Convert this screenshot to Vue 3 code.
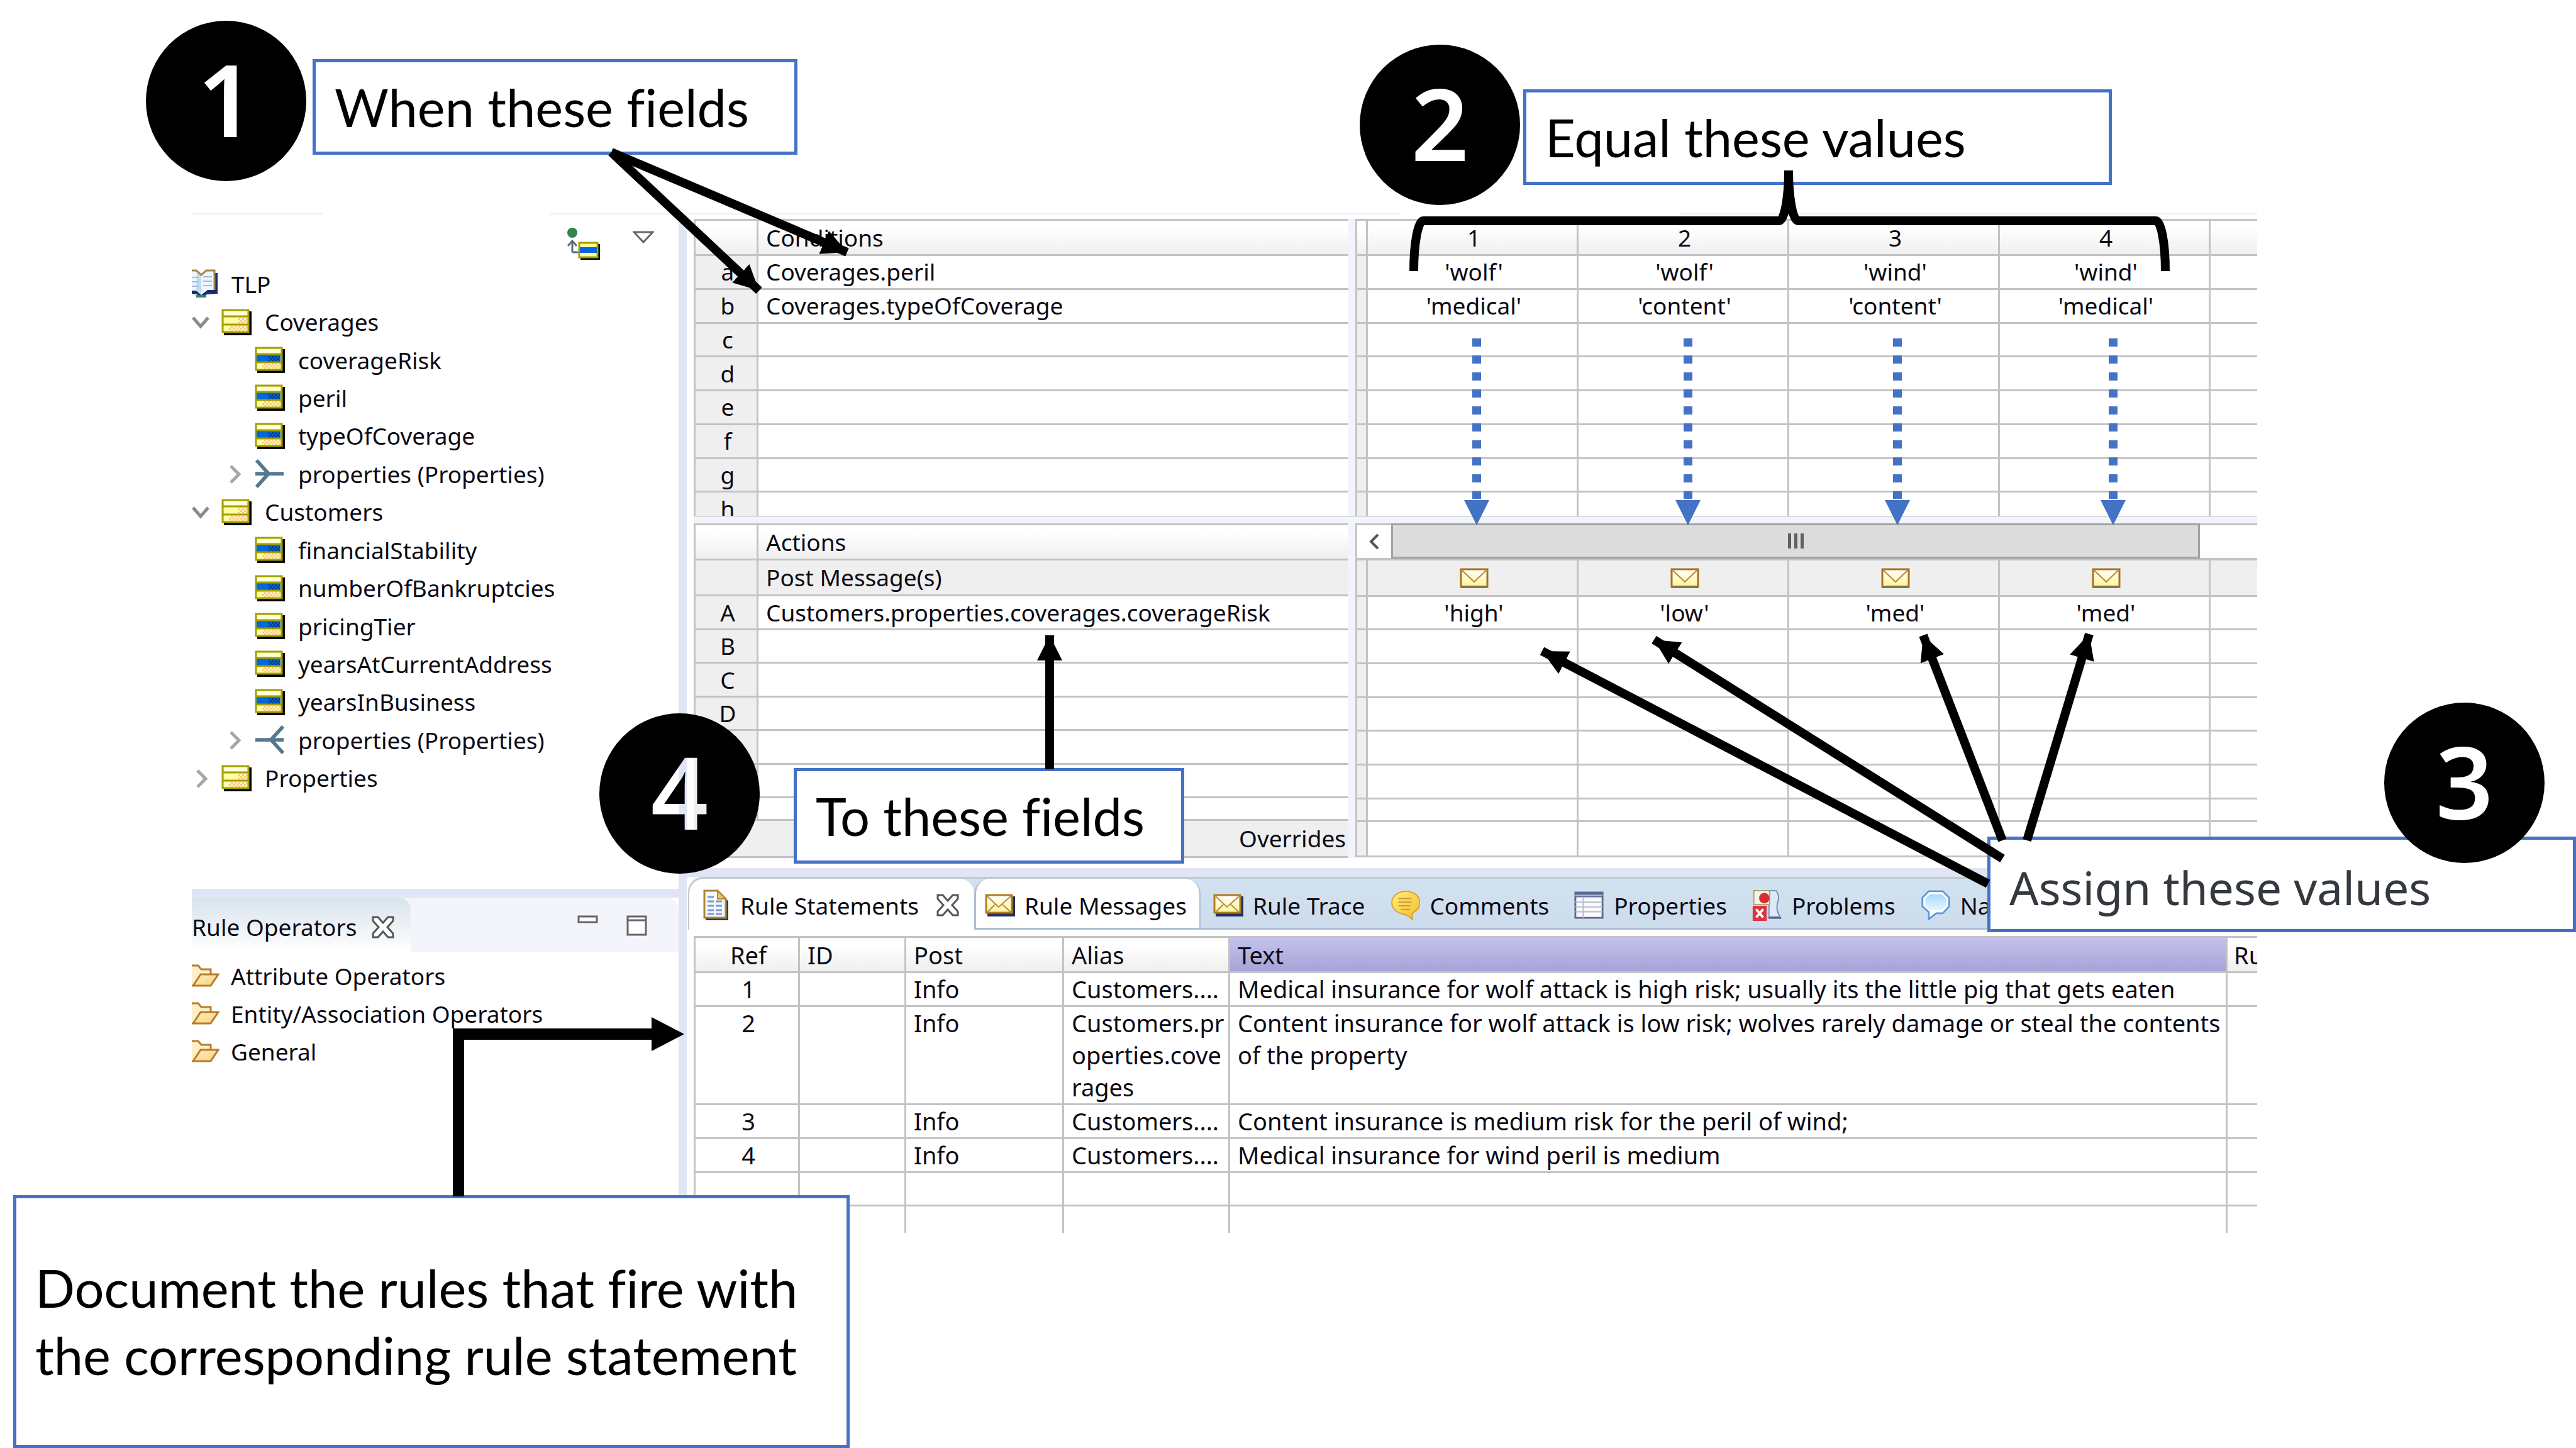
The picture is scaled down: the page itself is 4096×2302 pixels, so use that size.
<script setup>
const tree = [
  { label: 'TLP', level: 0, icon: 'book' },
  { label: 'Coverages', level: 1, icon: 'entity', arrow: 'open' },
  { label: 'coverageRisk', level: 2, icon: 'attribute' },
  { label: 'peril', level: 2, icon: 'attribute' },
  { label: 'typeOfCoverage', level: 2, icon: 'attribute' },
  { label: 'properties (Properties)', level: 2, icon: 'fork-in', arrow: 'closed' },
  { label: 'Customers', level: 1, icon: 'entity', arrow: 'open' },
  { label: 'financialStability', level: 2, icon: 'attribute' },
  { label: 'numberOfBankruptcies', level: 2, icon: 'attribute' },
  { label: 'pricingTier', level: 2, icon: 'attribute' },
  { label: 'yearsAtCurrentAddress', level: 2, icon: 'attribute' },
  { label: 'yearsInBusiness', level: 2, icon: 'attribute' },
  { label: 'properties (Properties)', level: 2, icon: 'fork-out', arrow: 'closed' },
  { label: 'Properties', level: 1, icon: 'entity', arrow: 'closed' },
]

const operators = ['Attribute Operators', 'Entity/Association Operators', 'General']

const conditions = [
  { key: 'a', text: 'Coverages.peril', values: ["'wolf'", "'wolf'", "'wind'", "'wind'"] },
  { key: 'b', text: 'Coverages.typeOfCoverage', values: ["'medical'", "'content'", "'content'", "'medical'"] },
  ...['c', 'd', 'e', 'f', 'g', 'h'].map((key) => ({ key, text: '', values: ['', '', '', ''] })),
]

const actions = [
  { key: 'A', text: 'Customers.properties.coverages.coverageRisk', values: ["'high'", "'low'", "'med'", "'med'"] },
  ...['B', 'C', 'D', '', ''].map((key) => ({ key, text: '', values: ['', '', '', ''] })),
]

const tabs = [
  { label: 'Rule Statements', icon: 'document', kind: 'active' },
  { label: 'Rule Messages', icon: 'mail', kind: 'raised' },
  { label: 'Rule Trace', icon: 'mail', kind: 'plain' },
  { label: 'Comments', icon: 'comment', kind: 'plain' },
  { label: 'Properties', icon: 'sheet', kind: 'plain' },
  { label: 'Problems', icon: 'problem', kind: 'plain' },
  { label: 'Na', icon: 'balloon', kind: 'plain' },
]

const statements = [
  { ref: '1', post: 'Info', alias: 'Customers....', text: 'Medical insurance for wolf attack is high risk; usually its the little pig that gets eaten' },
  { ref: '2', post: 'Info', alias: 'Customers.pr\noperties.cove\nrages', text: 'Content insurance for wolf attack is low risk; wolves rarely damage or steal the contents\nof the property' },
  { ref: '3', post: 'Info', alias: 'Customers....', text: 'Content insurance is medium risk for the peril of wind;' },
  { ref: '4', post: 'Info', alias: 'Customers....', text: 'Medical insurance for wind peril is medium' },
  { ref: '', post: '', alias: '', text: '' },
]

const dotted = [2348, 2684, 3017, 3360]
const arrows = [
  [972, 242, 1347, 401],
  [972, 242, 1207, 462],
  [1669, 1223, 1669, 1010],
  [3161, 1405, 2452, 1035],
  [3184, 1365, 2630, 1017],
  [3184, 1336, 3058, 1010],
  [3223, 1336, 3322, 1008],
]
</script>

<template>
  <main class="page">
    <svg class="defs" aria-hidden="true">
      <defs>
        <linearGradient id="cream" x1="0" y1="0" x2="0" y2="1">
          <stop offset="0" stop-color="#ffffff" />
          <stop offset="1" stop-color="#fff59a" />
        </linearGradient>
        <linearGradient id="folder-fill" x1="0" y1="0" x2="1" y2="1">
          <stop offset="0" stop-color="#fff0c4" />
          <stop offset="1" stop-color="#fbd07a" />
        </linearGradient>
        <linearGradient id="gold" x1="0" y1="0" x2="1" y2="1">
          <stop offset="0" stop-color="#fff27a" />
          <stop offset="1" stop-color="#f6b92c" />
        </linearGradient>
        <linearGradient id="sky" x1="0" y1="0" x2="0" y2="1">
          <stop offset="0" stop-color="#a9d8ff" />
          <stop offset="1" stop-color="#e6f6ff" />
        </linearGradient>
        <pattern id="peach" width="6" height="6" patternUnits="userSpaceOnUse">
          <rect width="3" height="3" fill="#ffc29b" />
          <rect x="3" y="3" width="3" height="3" fill="#ffc29b" />
        </pattern>
        <pattern id="navy" width="6" height="6" patternUnits="userSpaceOnUse">
          <rect width="3" height="3" fill="#0a3a7c" />
          <rect x="3" y="3" width="3" height="3" fill="#0a3a7c" />
        </pattern>
        <marker id="head" markerUnits="userSpaceOnUse" markerWidth="42" markerHeight="42" refX="40" refY="20" orient="auto">
          <path d="M0 0 L40 20 L0 40 Z" fill="#000" />
        </marker>
      </defs>
      <symbol id="entity" viewBox="0 0 48 42">
        <path d="M4 4h44v38H4z" fill="#000" />
        <path d="M2 2h41v35H2z" fill="#ffffa0" stroke="#a0a000" stroke-width="3" />
        <path d="M4 4h37v6H4z" fill="#ffffd8" />
        <path d="M26 14h15v9H26zM12 27h29v8H12z" fill="url(#peach)" />
        <path d="M2 12h41M2 25h41" stroke="#a0a000" stroke-width="3" />
      </symbol>
      <symbol id="attribute" viewBox="0 0 48 42">
        <path d="M4 4h44v38H4z" fill="#000" />
        <path d="M2 2h41v35H2z" fill="#ffffa0" stroke="#a0a000" stroke-width="3" />
        <path d="M4 4h37v6H4z" fill="#ffffd8" />
        <path d="M3 13h38v11H3z" fill="#0067dc" />
        <path d="M22 15h18v9H22z" fill="url(#navy)" />
        <path d="M12 27h29v8H12z" fill="url(#peach)" />
        <path d="M2 12h41M2 25h41" stroke="#a0a000" stroke-width="3" />
      </symbol>
      <symbol id="book" viewBox="0 0 42 46">
        <path d="M0 33v6l8 1 8 5 8-5 17-1V6h-5z" fill="#1a2a6c" />
        <path d="M7 41h16v4H7z" fill="#1f8a5a" />
        <path d="M0 2h8l6 6 9-6h14v31H25l-10 8-8-7H0z" fill="#eef5fd" />
        <path d="M8 4l7 6v30l-8-7z" fill="#bcdcf8" />
        <path d="M0 13h11M0 20h11M0 27h11M18 12h14M18 19h14M18 26h14" stroke="#a9bccf" stroke-width="2" />
        <path d="M0 2h7l8 7 8-7h13v31" fill="none" stroke="#a08a4a" stroke-width="3" />
      </symbol>
      <symbol id="fork-in" viewBox="0 0 48 48">
        <path d="M2 2L22 24L2 46M0 24H47" fill="none" stroke="#55788f" stroke-width="6" />
      </symbol>
      <symbol id="fork-out" viewBox="0 0 48 48">
        <path d="M46 2L26 24L46 46M0 24H47" fill="none" stroke="#55788f" stroke-width="6" />
      </symbol>
      <symbol id="folder" viewBox="0 0 44 38">
        <path d="M-4 35V3h14l5 6h15v8" fill="#fdf0c8" stroke="#b97c2e" stroke-width="3" />
        <path d="M-2 35h4L14 17h28L30 35z" fill="url(#folder-fill)" stroke="#b97c2e" stroke-width="3" />
      </symbol>
      <symbol id="document" viewBox="0 0 48 50">
        <path d="M8 49h36V18l-4-2v27H8z" fill="#22356f" />
        <path d="M6 2h21l13 13v30H6z" fill="#f3f8ff" stroke="#ab8434" stroke-width="3" />
        <path d="M27 2v13h13z" fill="#f3c65a" stroke="#ab8434" stroke-width="2" />
        <path d="M11 12h13M11 19h26M11 26h26M11 33h26M11 39h26" stroke="#7c9ad0" stroke-width="3" stroke-dasharray="10 3" />
      </symbol>
      <symbol id="mail" viewBox="0 0 48 36">
        <path d="M4 4h44v32H4z" fill="#24305e" />
        <path d="M2 2h41v28H2z" fill="url(#cream)" stroke="#b07c1c" stroke-width="3" />
        <path d="M4 4l18 17L41 4M4 29l12-12M41 29L28 17" fill="none" stroke="#b98a3c" stroke-width="2" />
      </symbol>
      <symbol id="letter" viewBox="0 0 46 32">
        <path d="M2 2h42v28H2z" fill="url(#cream)" stroke="#a8731c" stroke-width="3" />
        <path d="M3 3l20 19L43 3" fill="none" stroke="#b98a3c" stroke-width="2" />
        <path d="M2 30h42" stroke="#857642" stroke-width="4" />
      </symbol>
      <symbol id="comment" viewBox="0 0 50 50">
        <path d="M25 2a23 19 0 0 0-6 37q10 1 19 10-3-8 1-12A23 19 0 0 0 25 2z" fill="url(#gold)" stroke="#d9a030" stroke-width="2" />
        <path d="M14 14h22M14 20h22M14 26h20M18 32h16" stroke="#c99a35" stroke-width="2" />
      </symbol>
      <symbol id="sheet" viewBox="0 0 50 46">
        <path d="M2 2h45v42H2z" fill="#fbfbfd" stroke="#5a6890" stroke-width="3" />
        <path d="M2 2h45v8H2z" fill="#5a6890" />
        <path d="M2 7h45" stroke="#a9b5d3" stroke-width="3" />
        <path d="M2 18h45M2 26h45M2 34h45M15 10v34" stroke="#b4bccb" stroke-width="2" />
      </symbol>
      <symbol id="problem" viewBox="0 0 50 54">
        <path d="M2 2h38q7 8 3 20t4 25H28V2" fill="#dce9f8" stroke="#7b8cb3" stroke-width="2" />
        <path d="M2 2h27v24H2z" fill="#f7f5ea" stroke="#a7a070" stroke-width="2" />
        <circle cx="20" cy="15" r="9" fill="#d92c38" />
        <path d="M0 28h24v26H0z" fill="#d93444" />
        <path d="M6 34l12 14M18 34L6 48" stroke="#fff" stroke-width="4" />
        <path d="M27 49h22" stroke="#5a6890" stroke-width="3" />
      </symbol>
      <symbol id="balloon" viewBox="0 0 52 52">
        <path d="M14 2h24l11 11v15L38 40H27L14 50V38L3 28V13z" fill="#fff" stroke="#5b98d6" stroke-width="3" />
        <path d="M16 7h20l8 8v12l-8 8H16l-8-8V15z" fill="url(#sky)" />
      </symbol>
      <symbol id="close" viewBox="0 0 36 36">
        <path d="M2 2h8l8 9 8-9h8v6l-9 10 9 10v6h-8l-8-9-8 9H2v-6l9-10L2 8z" fill="#fff" stroke="#555" stroke-width="3" />
      </symbol>
    </svg>

    <div class="workbench">
      <div class="top-rule"></div>
      <div class="columns">
        <aside class="side">
          <section class="vocabulary">
            <div class="tools">
              <button type="button" aria-label="Show inherited">
                <svg width="52" height="52" viewBox="0 0 52 52">
                  <circle cx="8" cy="9" r="8" fill="#33854f" />
                  <path d="M8 40V22M1 30l7-8 7 8M8 40h10" fill="none" stroke="#5b6b7e" stroke-width="3" />
                  <path d="M21 27h31v25H21z" fill="#000" />
                  <path d="M19 25h29v23H19z" fill="#ffffa0" stroke="#a0a000" stroke-width="3" />
                  <path d="M20 32h27v9H20z" fill="#0067dc" />
                </svg>
              </button>
              <button type="button" aria-label="View menu">
                <svg width="34" height="34" viewBox="0 0 34 34">
                  <path d="M2 8h30L17 24z" fill="#fff" stroke="#666" stroke-width="3" />
                </svg>
              </button>
            </div>
            <ul class="tree">
              <li v-for="(n, i) in tree" :key="i" :class="'level-' + n.level">
                <span v-if="n.level" class="twisty">
                  <svg v-if="n.arrow === 'open'" width="30" height="24" viewBox="0 0 30 24">
                    <path d="M2 5l12 14L26 5" fill="none" stroke="#8a8a8a" stroke-width="5" />
                  </svg>
                  <svg v-else-if="n.arrow" width="24" height="34" viewBox="0 0 24 34">
                    <path d="M6 5l13 13L6 31" fill="none" stroke="#a6a6a6" stroke-width="5" />
                  </svg>
                </span>
                <svg class="node-icon"><use :href="'#' + n.icon" /></svg>
                <span>{{ n.label }}</span>
              </li>
            </ul>
          </section>
          <section class="operators">
            <header>
              <div class="side-tab">
                <span>Rule Operators</span>
                <button type="button" aria-label="Close"><svg class="close"><use href="#close" /></svg></button>
              </div>
              <div class="window-tools">
                <button type="button" aria-label="Minimize">
                  <svg width="33" height="33" viewBox="0 0 33 33"><path d="M2 2h29v9H2z" fill="#fff" stroke="#666" stroke-width="3" /></svg>
                </button>
                <button type="button" aria-label="Maximize">
                  <svg width="33" height="33" viewBox="0 0 33 33"><path d="M2 2h29v29H2zM2 8h29" fill="#fff" stroke="#666" stroke-width="3" /></svg>
                </button>
              </div>
            </header>
            <ul>
              <li v-for="o in operators" :key="o">
                <svg class="folder"><use href="#folder" /></svg>
                <span>{{ o }}</span>
              </li>
            </ul>
          </section>
        </aside>

        <div class="sash"></div>

        <div class="main">
          <section class="sheet">
            <div class="pane upper">
              <table>
                <colgroup><col class="c-key" /><col /></colgroup>
                <thead><tr><th></th><th class="left">Conditions</th></tr></thead>
                <tbody>
                  <tr v-for="r in conditions" :key="r.key"><th>{{ r.key }}</th><td>{{ r.text }}</td></tr>
                </tbody>
              </table>
            </div>
            <div class="splitter"></div>
            <div class="pane upper">
              <table>
                <colgroup><col class="c-gap" /><col v-for="n in 4" :key="n" class="c-rule" /><col /></colgroup>
                <thead><tr><th></th><th v-for="n in 4" :key="n">{{ n }}</th><th class="last"></th></tr></thead>
                <tbody>
                  <tr v-for="r in conditions" :key="r.key">
                    <th></th><td v-for="(v, i) in r.values" :key="i" class="value">{{ v }}</td><td class="last"></td>
                  </tr>
                </tbody>
              </table>
            </div>

            <div class="band"></div>

            <div class="pane lower">
              <table>
                <colgroup><col class="c-key" /><col /></colgroup>
                <thead>
                  <tr><th></th><th class="left">Actions</th></tr>
                </thead>
                <tbody>
                  <tr class="post"><th></th><td>Post Message(s)</td></tr>
                  <tr v-for="(r, i) in actions" :key="i"><th>{{ r.key }}</th><td>{{ r.text }}</td></tr>
                  <tr class="partial"><th></th><td></td></tr>
                  <tr class="overrides"><td colspan="2">Overrides</td></tr>
                </tbody>
              </table>
            </div>
            <div class="splitter"></div>
            <div class="pane lower values">
              <div class="scroller">
                <button type="button" aria-label="Scroll left">
                  <svg width="20" height="26" viewBox="0 0 20 26"><path d="M16 2L5 13l11 11" fill="none" stroke="#555" stroke-width="4" /></svg>
                </button>
                <div class="thumb"><i></i><i></i><i></i></div>
              </div>
              <table>
                <colgroup><col class="c-gap" /><col v-for="n in 4" :key="n" class="c-rule" /><col /></colgroup>
                <tbody>
                  <tr class="post">
                    <th></th><td v-for="n in 4" :key="n" class="value"><svg class="letter"><use href="#letter" /></svg></td><td class="last"></td>
                  </tr>
                  <tr v-for="(r, i) in actions" :key="i">
                    <th></th><td v-for="(v, j) in r.values" :key="j" class="value">{{ v }}</td><td class="last"></td>
                  </tr>
                  <tr class="partial"><th></th><td v-for="n in 4" :key="n"></td><td class="last"></td></tr>
                  <tr class="tail"><th></th><td v-for="n in 4" :key="n"></td><td class="last"></td></tr>
                </tbody>
              </table>
            </div>
          </section>

          <section class="views">
            <div class="tabs" role="tablist">
              <button v-for="t in tabs" :key="t.label" type="button" role="tab" class="tab" :class="t.kind">
                <svg class="tab-icon"><use :href="'#' + t.icon" /></svg>
                <span>{{ t.label }}</span>
                <svg v-if="t.kind === 'active'" class="close"><use href="#close" /></svg>
              </button>
            </div>
            <div class="statements">
              <table>
                <colgroup>
                  <col class="s-ref" /><col class="s-id" /><col class="s-post" /><col class="s-alias" /><col /><col class="s-rest" />
                </colgroup>
                <thead>
                  <tr><th>Ref</th><th class="left">ID</th><th class="left">Post</th><th class="left">Alias</th><th class="left picked">Text</th><th class="left last">Ru</th></tr>
                </thead>
                <tbody>
                  <tr v-for="(s, i) in statements" :key="i">
                    <td class="ref">{{ s.ref }}</td><td></td><td>{{ s.post }}</td><td>{{ s.alias }}</td><td>{{ s.text }}</td><td class="last"></td>
                  </tr>
                  <tr class="open-row"><td v-for="n in 5" :key="n"></td><td class="last"></td></tr>
                </tbody>
              </table>
            </div>
          </section>
        </div>
      </div>
    </div>

    <p class="callout when">When these fields</p>
    <p class="callout equal">Equal these values</p>
    <p class="callout to">To these fields</p>
    <p class="callout assign">Assign these values</p>
    <p class="callout document">Document the rules that fire with the corresponding rule statement</p>

    <svg class="overlay" aria-hidden="true">
      <g stroke="#000" stroke-width="14" fill="none">
        <line v-for="(a, i) in arrows" :key="i" :x1="a[0]" :y1="a[1]" :x2="a[2]" :y2="a[3]" class="shaft" />
        <path d="M2248 431A15 80 0 0 1 2263 351H2829A15 80 0 0 0 2844 271A15 80 0 0 0 2859 351H3428A15 80 0 0 1 3443 431" />
        <path d="M729 1902V1644H1040" stroke-width="18" />
      </g>
      <path d="M1036 1617L1088 1644L1036 1671Z" />
      <g v-for="x in dotted" :key="x" stroke="#4472c4" fill="#4472c4">
        <line :x1="x" y1="538" :x2="x" y2="793" stroke-width="14" stroke-dasharray="13 14" />
        <path :d="`M${x - 20} 795h40l-20 40z`" stroke="none" />
      </g>
    </svg>

    <b class="step one">1</b>
    <b class="step two">2</b>
    <b class="step three">3</b>
    <b class="step four"><span>4</span></b>
  </main>
</template>

<style>
body {
  margin: 0;
  background: #fff;
}
</style>

<style scoped>
* {
  box-sizing: border-box;
}
.page {
  position: relative;
  min-height: 100vh;
  padding: 338px 507px 0 305px;
  overflow: hidden;
  color: #0c0a14;
  font: 400 37px/51px 'Noto Sans', 'Open Sans', sans-serif;
}
.defs {
  position: absolute;
  width: 0;
  height: 0;
}
svg {
  display: block;
  flex: none;
}
button {
  padding: 0;
  border: 0;
  background: none;
  color: inherit;
  font: inherit;
}
ul {
  margin: 0;
  padding: 0;
  list-style: none;
}
.top-rule {
  height: 4px;
  background: linear-gradient(90deg, #f2f4fb 208px, #fff 208px 569px, #f2f4fb 569px 1923px, #fff 1923px 2365px, #f2f4fb 2365px);
}
.columns {
  display: flex;
  height: 1618px;
}

/* left column */
.side {
  display: flex;
  flex-direction: column;
  width: 774px;
}
.vocabulary {
  height: 1071px;
}
.tools {
  display: flex;
  justify-content: flex-end;
  align-items: flex-start;
  gap: 52px;
  height: 79px;
  padding: 19px 39px 0 0;
}
.tree {
  display: grid;
  grid-auto-rows: 1fr;
  height: 846px;
}
.tree li,
.operators li {
  display: flex;
  align-items: center;
  white-space: nowrap;
}
.twisty {
  display: flex;
  justify-content: center;
  width: 30px;
  margin-right: 17px;
}
.level-2 .twisty {
  margin-left: 53px;
}
.node-icon {
  width: 48px;
  height: 46px;
  margin-right: 21px;
}
.level-0 .node-icon {
  width: 42px;
}
.operators {
  flex: 1;
  border-top: 14px solid #e0e5f5;
}
.operators header {
  display: flex;
  height: 87px;
  background: #f3f5fb;
  border-radius: 0 20px 0 0;
}
.side-tab {
  display: flex;
  align-items: center;
  justify-content: space-between;
  width: 348px;
  padding: 6px 26px 0 0;
  background: linear-gradient(#d8e3ec, #fff);
  border-radius: 0 20px 0 0;
}
.close {
  width: 36px;
  height: 36px;
}
.window-tools {
  display: flex;
  flex: 1;
  justify-content: flex-end;
  gap: 45px;
  padding: 28px 50px 0 0;
}
.window-tools button {
  height: 33px;
}
.operators ul {
  padding-top: 7px;
}
.operators li {
  height: 60px;
}
.folder {
  width: 44px;
  height: 38px;
  margin-right: 18px;
}
.sash {
  width: 13px;
  background: #e0e5f5;
}

/* decision sheet */
.main {
  flex: 1;
  min-width: 0;
  padding-top: 6px;
}
.sheet {
  display: grid;
  grid-template-columns: 1041px 11px 1fr;
  grid-template-rows: 472px 12px 532px;
  margin-left: 11px;
}
.splitter,
.band {
  background: #f2f4fb;
}
.band {
  grid-column: 1 / -1;
  border-top: 2px solid #dcdcdc;
}
.pane {
  overflow: hidden;
  min-width: 0;
}
table {
  width: 100%;
  table-layout: fixed;
  border-collapse: separate;
  border-spacing: 0;
  border-top: 3px solid #c3c3c3;
  border-left: 3px solid #c3c3c3;
}
.upper table {
  height: 489px;
}
.lower table {
  height: 532px;
}
.values table {
  height: 472px;
  border-top: 0;
}
th,
td {
  height: 53px;
  padding: 0 0 0 12px;
  border-right: 3px solid #c3c3c3;
  border-bottom: 3px solid #c3c3c3;
  text-align: left;
  font-weight: 400;
  line-height: 50px;
  white-space: nowrap;
  overflow: hidden;
}
th {
  padding: 0 0 0 5px;
  background: #efefef;
  text-align: center;
}
thead th {
  height: 56px;
  background: linear-gradient(#fff 20%, #efefef);
}
th.left {
  padding-left: 12px;
  text-align: left;
}
.sheet .pane:not(.values) td:last-child,
.sheet th.left,
.last {
  border-right: 0;
}
td.value {
  padding: 0 0 0 5px;
  text-align: center;
}
.c-key {
  width: 100px;
}
.c-gap {
  width: 17px;
}
.c-rule {
  width: 335px;
}
.post td,
.post th {
  height: 57px;
  background: #efefef;
}
.partial td,
.partial th {
  height: 36px;
}
.overrides td {
  height: 58px;
  padding-right: 4px;
  background: #efefef;
  text-align: right;
}
.tail td,
.tail th {
  height: 55px;
}
.letter {
  width: 46px;
  height: 32px;
  margin: 2px auto 0;
}
.scroller {
  display: flex;
  height: 59px;
  border: solid #c3c3c3;
  border-width: 3px 0 4px 3px;
}
.scroller button {
  display: flex;
  align-items: center;
  justify-content: center;
  width: 54px;
}
.thumb {
  display: flex;
  align-items: center;
  justify-content: center;
  gap: 5px;
  width: 1286px;
  margin: -3px 0 -1px;
  border: 3px solid #a2a2a2;
  background: #dcdcdc;
}
.thumb i {
  width: 5px;
  height: 24px;
  background: #606060;
}

/* lower views */
.views {
  margin-top: 16px;
  border-top: 14px solid #e0e5f5;
}
.tabs {
  display: flex;
  height: 84px;
  margin: 0 0 10px 2px;
  border: solid #c3c8d0;
  border-width: 3px 0 0 2px;
  border-radius: 24px 0 0 0;
  background: linear-gradient(#d3e2f0, #cddcec);
  overflow: hidden;
}
.tab {
  display: flex;
  align-items: center;
  gap: 15px;
  padding: 6px 20px 0;
  border-bottom: 3px solid #b0bdd3;
  white-space: nowrap;
}
.tab:last-child {
  flex: 1;
}
.tab.active {
  padding-left: 18px;
  padding-right: 24px;
  background: #fff;
  border-bottom-color: #fff;
  border-radius: 24px 24px 0 0;
}
.tab.active .close {
  margin-left: 13px;
}
.tab.raised {
  padding-left: 14px;
  background: #fff;
  border-left: 3px solid #b0bdd3;
  border-right: 2px solid #b0bdd3;
  border-radius: 24px 24px 0 0;
}
.tab-icon {
  width: 48px;
  height: 50px;
}
.statements {
  margin-left: 11px;
  font-size: 38px;
}
.statements table {
  height: 472px;
}
.statements td {
  line-height: 51px;
  vertical-align: top;
  white-space: pre;
}
.statements .ref {
  padding: 0 0 0 5px;
  text-align: center;
}
.statements .open-row td {
  height: 42px;
  border-bottom: 0;
}
.statements .picked {
  background: linear-gradient(#c4c2eb, #a5a3d8);
}
.statements .last {
  padding-left: 10px;
}
.s-ref {
  width: 166px;
}
.s-id {
  width: 169px;
}
.s-post {
  width: 251px;
}
.s-alias {
  width: 264px;
}
.s-rest {
  width: 47px;
}

/* annotations */
.callout {
  position: absolute;
  display: flex;
  align-items: center;
  margin: 0;
  padding: 0 30px;
  border: 5px solid #4472c4;
  background: #fff;
  color: #000;
  font: 400 83px/107px Lato, Carlito, sans-serif;
  font-variant-ligatures: none;
}
.when {
  left: 497px;
  top: 94px;
  width: 771px;
  height: 152px;
}
.equal {
  left: 2422px;
  top: 142px;
  width: 936px;
  height: 152px;
}
.to {
  left: 1262px;
  top: 1221px;
  width: 621px;
  height: 152px;
}
.assign {
  left: 3160px;
  right: 0;
  top: 1330px;
  height: 152px;
  padding-top: 8px;
  color: #34383f;
  font: 400 73px/107px 'Noto Sans', sans-serif;
}
.document {
  left: 21px;
  top: 1900px;
  width: 1330px;
  height: 402px;
}
.overlay {
  position: absolute;
  inset: 0;
  width: 100%;
  height: 100%;
  overflow: visible;
}
.shaft {
  marker-end: url(#head);
}
.step {
  position: absolute;
  display: flex;
  align-items: center;
  justify-content: center;
  width: 255px;
  height: 255px;
  padding-bottom: 10px;
  border-radius: 50%;
  background: #000;
  color: #fff;
  font: 600 160px/200px 'Noto Sans', sans-serif;
}
.one {
  left: 232px;
  top: 33px;
}
.two {
  left: 2162px;
  top: 71px;
}
.three {
  left: 3791px;
  top: 1117px;
}
.four {
  left: 953px;
  top: 1134px;
}
.four span {
  width: 255px;
  background: linear-gradient(90deg, #fff 126px, #e0e5f5 126px 139px, #fff 139px 150px, #efefef 150px);
  background-clip: text;
  color: transparent;
  text-align: center;
}
</style>
